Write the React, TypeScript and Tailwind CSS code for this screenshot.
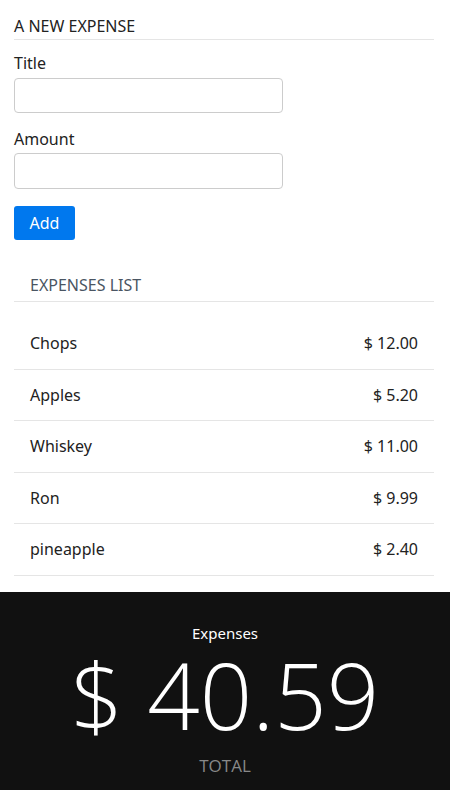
import { useState } from "react";

type Expense = { title: string; amount: number };

const initial: Expense[] = [
  { title: "Chops", amount: 12 },
  { title: "Apples", amount: 5.2 },
  { title: "Whiskey", amount: 11 },
  { title: "Ron", amount: 9.99 },
  { title: "pineapple", amount: 2.4 },
];

export default function App() {
  const [expenses, setExpenses] = useState<Expense[]>(initial);
  const [title, setTitle] = useState("");
  const [amount, setAmount] = useState("");

  const total = expenses.reduce((sum, e) => sum + e.amount, 0);

  function addExpense() {
    const value = parseFloat(amount);
    if (!title || isNaN(value)) return;
    setExpenses([...expenses, { title, amount: value }]);
    setTitle("");
    setAmount("");
  }

  return (
    <div className="min-h-[790px] bg-white font-['Noto_Sans',sans-serif] text-[#222]">
      <div className="px-[14px] pr-[16px]">
        <h2 className="border-b border-[#e5e5e5] pt-[17px] pb-[4px] text-[16px] leading-[18px] uppercase">
          A New Expense
        </h2>
        <div className="w-[269px] pt-[13px]">
          <label className="block text-[16px] leading-[20px]">Title</label>
          <input
            value={title}
            onChange={(e) => setTitle(e.target.value)}
            className="mt-[5px] block h-[35px] w-full rounded-[4px] border border-[#ccc] px-2 outline-none"
          />
          <label className="mt-[16px] block text-[16px] leading-[20px]">Amount</label>
          <input
            value={amount}
            onChange={(e) => setAmount(e.target.value)}
            className="mt-[4px] block h-[36px] w-full rounded-[4px] border border-[#ccc] px-2 outline-none"
          />
          <button
            type="button"
            onClick={addExpense}
            className="mt-[17px] h-[34px] w-[61px] rounded-[3px] bg-[#0078ee] text-[16px] text-white"
          >
            Add
          </button>
        </div>

        <h3 className="mt-[26px] border-b border-[#e5e5e5] px-[16px] pt-[10px] pb-[7px] text-[16px] leading-[18px] text-[#4a5562] uppercase">
          Expenses List
        </h3>
        <ul className="mt-[16px] pb-[16px]">
          {expenses.map((e, i) => (
            <li
              key={i}
              className="flex h-[51.5px] items-center justify-between border-b border-[#e5e5e5] px-[16px] text-[16px]"
            >
              <span>{e.title}</span>
              <span>$ {e.amount.toFixed(2)}</span>
            </li>
          ))}
        </ul>
      </div>

      <footer className="flex h-[198px] flex-col items-center bg-[#111] text-center">
        <div className="pt-[31px] text-[15px] leading-[20px] text-white">Expenses</div>
        <div className="mt-[8px] font-['Open_Sans',sans-serif] text-[92px] leading-[88px] font-light text-white">
          $ {total.toFixed(2)}
        </div>
        <div className="mt-[16px] font-['Open_Sans',sans-serif] text-[17px] leading-[22px] text-[#888]">
          TOTAL
        </div>
      </footer>
    </div>
  );
}
